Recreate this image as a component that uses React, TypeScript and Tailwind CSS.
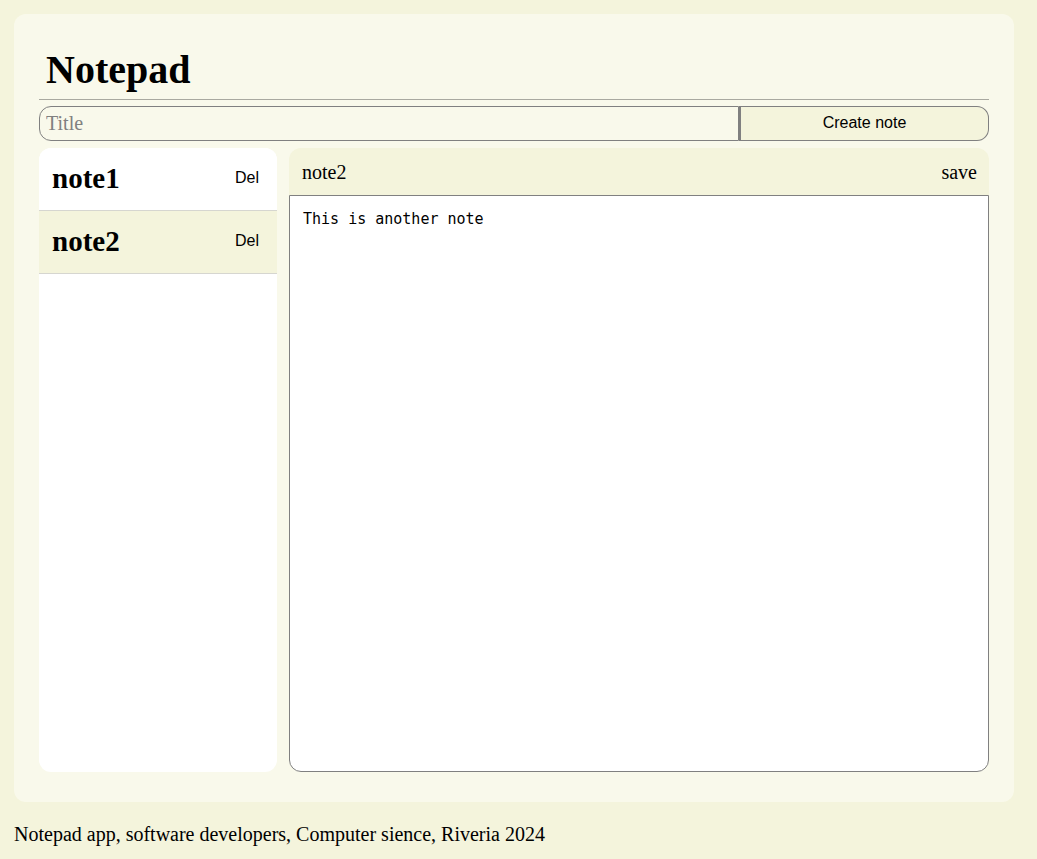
import { useState } from 'react'

const NOTES = [
  { id: 1, title: 'note1', body: 'This is my first note' },
  { id: 2, title: 'note2', body: 'This is another note' },
]

const serif = { fontFamily: '"Liberation Serif", "Times New Roman", serif' }
const sans = { fontFamily: '"Liberation Sans", Arial, sans-serif' }

export default function App() {
  const [notes, setNotes] = useState(NOTES)
  const [selected, setSelected] = useState(2)
  const [title, setTitle] = useState('')

  const current = notes.find((n) => n.id === selected)

  function createNote() {
    if (!title) return
    const id = Date.now()
    setNotes([...notes, { id, title, body: '' }])
    setTitle('')
    setSelected(id)
  }

  return (
    <div className="min-h-[859px] bg-[#f4f4dc] pt-[14px] text-black" style={serif}>
      <main className="ml-[14px] w-[1000px] rounded-[12px] bg-[#f9f9eb] px-[25px] pb-[30px]">
        {/* Header */}
        <header className="border-b border-[#a9a9a0] pt-[36px] pb-[9px]">
          <h1 className="pl-[7px] text-[40px] font-bold leading-[40px]">Notepad</h1>
        </header>

        {/* New note */}
        <div className="mt-[6px] flex h-[35px]">
          <input
            value={title}
            onChange={(e) => setTitle(e.target.value)}
            placeholder="Title"
            className="h-full flex-1 rounded-l-[12px] border border-[#808080] bg-transparent px-[6px] text-[20px] outline-none placeholder:text-[#808080]"
            style={serif}
          />
          <button
            onClick={createNote}
            className="h-full w-[250px] rounded-r-[12px] border border-l-2 border-[#808080] bg-[#f4f4dc] pb-[2px] text-[16px]"
            style={sans}
          >
            Create note
          </button>
        </div>

        {/* Body */}
        <div className="mt-[7px] flex h-[624px] gap-[12px]">
          <aside className="w-[238px] shrink-0 overflow-hidden rounded-[12px] bg-white">
            {notes.map((note) => (
              <div
                key={note.id}
                onClick={() => setSelected(note.id)}
                className={`flex h-[63px] cursor-pointer items-center justify-between border-b border-[#d6d6d0] pl-[13px] pr-[18px] ${
                  note.id === selected ? 'bg-[#f4f4dc]' : 'bg-white'
                }`}
              >
                <span className="text-[29px] font-bold">{note.title}</span>
                <button
                  onClick={(e) => {
                    e.stopPropagation()
                    setNotes(notes.filter((n) => n.id !== note.id))
                  }}
                  className="pb-[2px] text-[16px]"
                  style={sans}
                >
                  Del
                </button>
              </div>
            ))}
          </aside>

          <section className="flex flex-1 flex-col">
            <div className="flex h-[47px] shrink-0 items-center justify-between rounded-t-[12px] bg-[#f4f4dc] pl-[13px] pr-[12px] text-[20px]">
              <span>{current?.title}</span>
              <button style={serif}>save</button>
            </div>
            <textarea
              value={current?.body ?? ''}
              onChange={(e) =>
                setNotes(notes.map((n) => (n.id === selected ? { ...n, body: e.target.value } : n)))
              }
              className="flex-1 resize-none rounded-b-[12px] border border-[#808080] bg-white px-[13px] pt-[12px] text-[15px] outline-none"
              style={{ fontFamily: '"DejaVu Sans Mono", "Liberation Mono", monospace' }}
            />
          </section>
        </div>
      </main>

      {/* Footer */}
      <footer className="px-[14px] pt-[17px] text-[20px]">
        Notepad app, software developers, Computer sience, Riveria 2024
      </footer>
    </div>
  )
}
